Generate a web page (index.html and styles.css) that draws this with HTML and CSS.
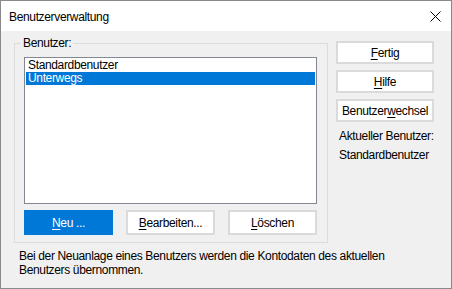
FILE: index.html
```html
<!DOCTYPE html>
<html lang="de">
<head>
  <meta charset="UTF-8" />
  <title>Benutzerverwaltung</title>
  <link rel="stylesheet" href="styles.css">
</head>
<body>
  <div class="window">
    <div class="titlebar">
      <span class="title">Benutzerverwaltung</span>
      <svg class="close" width="11" height="11" viewBox="0 0 11 11" aria-label="Schließen">
        <path d="M0.5 0.5 L10.5 10.5 M10.5 0.5 L0.5 10.5" stroke="#000" stroke-width="1" fill="none" />
      </svg>
    </div>

    <div class="client">
      <div class="top">
        <div class="group">
          <span class="group-label">Benutzer:</span>
          <ul class="list">
            <li>Standardbenutzer</li>
            <li class="selected">Unterwegs</li>
          </ul>
          <div class="actions">
            <button class="btn primary"><u>N</u>eu ...</button>
            <button class="btn"><u>B</u>earbeiten...</button>
            <button class="btn"><u>L</u>öschen</button>
          </div>
        </div>

        <div class="side">
          <button class="btn"><u>F</u>ertig</button>
          <button class="btn"><u>H</u>ilfe</button>
          <button class="btn">Benutzer<u>w</u>echsel</button>
          <div class="current">
            <span>Aktueller Benutzer:</span>
            <span>Standardbenutzer</span>
          </div>
        </div>
      </div>

      <p class="note">Bei der Neuanlage eines Benutzers werden die Kontodaten des aktuellen<br>Benutzers übernommen.</p>
    </div>
  </div>
</body>
</html>
```

FILE: styles.css
```css
* {
  box-sizing: border-box;
}
body {
  margin: 0;
  font-family: 'Liberation Sans', Arial, sans-serif;
  font-size: 12px;
  letter-spacing: -0.35px;
  color: #000;
  background: #f0f0f0;
}
.window {
  width: 452px;
  height: 289px;
  border: 1px solid #8a8a8a;
  display: flex;
  flex-direction: column;
  background: #f0f0f0;
}
.titlebar {
  height: 30px;
  background: #fff;
  display: flex;
  align-items: center;
  justify-content: space-between;
  padding: 0 10px 0 8px;
}
.title {
  line-height: 14px;
  margin-top: 1px;
}
.close {
  display: block;
}
.client {
  flex: 1;
  padding: 10px 17px 0 13px;
}
.top {
  display: flex;
  align-items: flex-start;
  gap: 8px;
}
.group {
  position: relative;
  width: 314px;
  margin-top: 2px;
  border: 1px solid #dcdcdc;
  padding: 13px 10px 7px 9px;
}
.group-label {
  position: absolute;
  top: -8px;
  left: 6px;
  padding: 0 2px;
  line-height: 14px;
  background: #f0f0f0;
}
.list {
  list-style: none;
  margin: 0;
  padding: 1px;
  height: 147px;
  background: #fff;
  border: 1px solid #828790;
}
.list li {
  height: 13px;
  line-height: 13px;
  padding-left: 2px;
}
.list .selected {
  background: #0078d7;
  color: #fff;
}
.actions {
  display: grid;
  grid-template-columns: repeat(3, 1fr);
  gap: 13px;
  margin-top: 6px;
}
.btn {
  font-family: inherit;
  font-size: 12px;
  letter-spacing: inherit;
  color: #000;
  background: #fff;
  border: 2px solid #dadada;
  height: 25px;
  padding: 0;
  line-height: 14px;
  white-space: nowrap;
}
.btn u {
  text-underline-offset: 2px;
}
.btn.primary {
  background: #0078d7;
  border-color: #0078d7;
  color: #fff;
}
.side {
  width: 98px;
  display: flex;
  flex-direction: column;
  gap: 6px;
}
.side .btn {
  height: 23px;
}
.current {
  display: flex;
  flex-direction: column;
  gap: 5px;
  margin-top: 1px;
  padding-left: 3px;
  line-height: 14px;
  white-space: nowrap;
}
.note {
  margin: 6px 0 0 5px;
  line-height: 14px;
}
```
